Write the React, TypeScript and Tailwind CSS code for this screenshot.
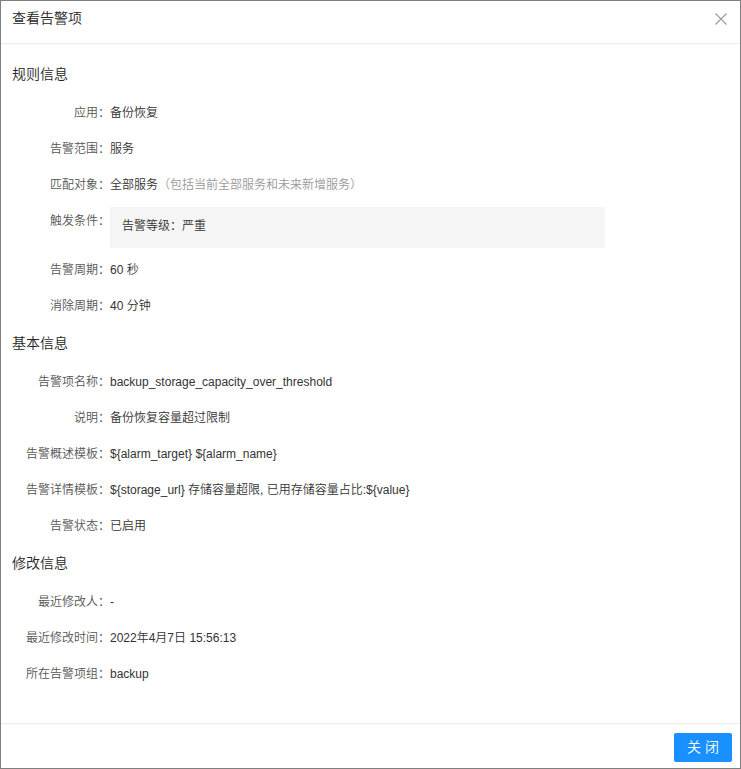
const font = "font-['Liberation_Sans','Noto_Sans_CJK_SC',sans-serif]";

type Row = { label: string; value: React.ReactNode };

function InfoRow({ label, value }: Row) {
  return (
    <div className="flex items-start py-[9px] leading-[18px] text-[12px]">
      <div className="w-[109px] flex-none text-right text-[#555]">{label}：</div>
      <div className="text-[#333]">{value}</div>
    </div>
  );
}

function SectionTitle({ children }: { children: React.ReactNode }) {
  return <div className="mt-[9px] mb-[11px] pl-[11px] text-[14px] leading-5 text-[#262626]">{children}</div>;
}

export default function App() {
  const rules: Row[] = [
    { label: '应用', value: '备份恢复' },
    { label: '告警范围', value: '服务' },
    {
      label: '匹配对象',
      value: (
        <>
          全部服务<span className="text-[#999]">（包括当前全部服务和未来新增服务）</span>
        </>
      ),
    },
  ];
  const periods: Row[] = [
    { label: '告警周期', value: '60 秒' },
    { label: '消除周期', value: '40 分钟' },
  ];
  const basic: Row[] = [
    { label: '告警项名称', value: 'backup_storage_capacity_over_threshold' },
    { label: '说明', value: '备份恢复容量超过限制' },
    { label: '告警概述模板', value: '${alarm_target} ${alarm_name}' },
    { label: '告警详情模板', value: '${storage_url} 存储容量超限, 已用存储容量占比:${value}' },
    { label: '告警状态', value: '已启用' },
  ];
  const modified: Row[] = [
    { label: '最近修改人', value: '-' },
    { label: '最近修改时间', value: '2022年4月7日 15:56:13' },
    { label: '所在告警项组', value: 'backup' },
  ];

  return (
    <div className={`${font} font-[350] w-[741px] h-[769px] border border-[#7f7f7f] bg-white flex flex-col`}>
      <div className="h-[43px] flex-none flex items-start justify-between border-b border-[#ebebeb] pl-[11px] pr-[13px] pt-[7px]">
        <span className="text-[14px] leading-5 text-[#262626]">查看告警项</span>
        <button className="mt-[5px] text-[#999]">
          <svg width="12" height="12" viewBox="0 0 12 12" fill="none" stroke="currentColor" strokeWidth="1.1">
            <path d="M0.5 0.5 L11.5 11.5 M11.5 0.5 L0.5 11.5" />
          </svg>
        </button>
      </div>

      <div className="flex-1 pt-[11px]">
        <SectionTitle>规则信息</SectionTitle>
        {rules.map((r) => (
          <InfoRow key={r.label} {...r} />
        ))}
        <div className="flex items-start py-1 leading-[18px] text-[12px]">
          <div className="w-[109px] flex-none text-right text-[#555] mt-[5px]">触发条件：</div>
          <div className="w-[495px] bg-[#f5f5f5] pl-3 pt-[10px] pb-[13px] text-[#333]">告警等级：严重</div>
        </div>
        {periods.map((r) => (
          <InfoRow key={r.label} {...r} />
        ))}

        <SectionTitle>基本信息</SectionTitle>
        {basic.map((r) => (
          <InfoRow key={r.label} {...r} />
        ))}

        <SectionTitle>修改信息</SectionTitle>
        {modified.map((r) => (
          <InfoRow key={r.label} {...r} />
        ))}
      </div>

      <div className="h-[45px] flex-none border-t border-[#ebebeb] flex justify-end items-start pt-[9px] pr-2">
        <button className="h-[29px] w-[58px] rounded-[2px] bg-[#1890ff] text-white text-[14px] tracking-[0.3em] pl-[0.3em]">
          关闭
        </button>
      </div>
    </div>
  );
}
